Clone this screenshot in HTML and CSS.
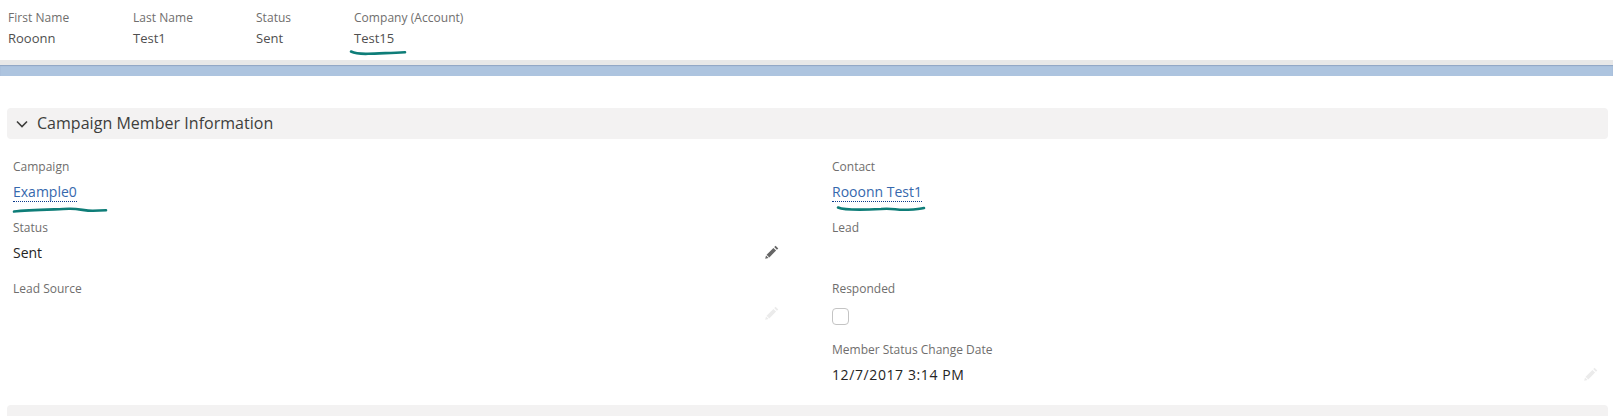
FILE: index.html
```html
<!DOCTYPE html>
<html lang="en">
<head>
<meta charset="utf-8">
<title>Campaign Member</title>
<link rel="stylesheet" href="styles.css">
</head>
<body>
<header class="highlights">
  <div class="hl hl-first"><div class="hl-label">First Name</div><div class="hl-value">Rooonn</div></div>
  <div class="hl hl-last"><div class="hl-label">Last Name</div><div class="hl-value">Test1</div></div>
  <div class="hl hl-status"><div class="hl-label">Status</div><div class="hl-value">Sent</div></div>
  <div class="hl">
    <div class="hl-label">Company (Account)</div>
    <div class="hl-value">Test15</div>
    <svg class="scribble scribble-company" viewBox="0 0 56 6" aria-hidden="true"><path d="M1 1.5C5 3.5 10 4 18 3.8S36 3 55 2.2"/></svg>
  </div>
</header>
<div class="band"></div>
<main class="page">
  <section class="section">
    <h2 class="section-head">
      <svg class="chevron" viewBox="0 0 12 8" aria-hidden="true"><path d="M1 1.5l5 5 5-5"/></svg>
      <span>Campaign Member Information</span>
    </h2>
    <div class="fields">
      <div class="field">
        <div class="label">Campaign</div>
        <div class="value"><a class="link">Example0</a>
          <svg class="scribble scribble-campaign" viewBox="0 0 94 6" aria-hidden="true"><path d="M1 4.5C15 3 40 2.5 56 1.8 66 1.5 72 4 80 3.8L93 3.3"/></svg>
        </div>
      </div>
      <div class="field">
        <div class="label">Contact</div>
        <div class="value"><a class="link">Rooonn Test1</a>
          <svg class="scribble scribble-contact" viewBox="0 0 88 6" aria-hidden="true"><path d="M1 1.5C8 4.5 25 4 44 3 56 2 58 4 68 3.8 76 3.5 82 3.5 87 2"/></svg>
        </div>
      </div>
      <div class="field">
        <div class="label">Status</div>
        <div class="value">Sent</div>
        <svg class="pencil" viewBox="0 0 14 14" aria-hidden="true"><path d="M10.6.7l2.7 2.7-1.4 1.4-2.7-2.7zM8.4 2.9l2.7 2.7-6.8 6.8-2.7-2.7zM1 10.4l2.6 2.6-3.4.8z"/></svg>
      </div>
      <div class="field">
        <div class="label">Lead</div>
        <div class="value"></div>
      </div>
      <div class="field">
        <div class="label">Lead Source</div>
        <div class="value"></div>
        <svg class="pencil pencil-faint" viewBox="0 0 14 14" aria-hidden="true"><path d="M10.6.7l2.7 2.7-1.4 1.4-2.7-2.7zM8.4 2.9l2.7 2.7-6.8 6.8-2.7-2.7zM1 10.4l2.6 2.6-3.4.8z"/></svg>
      </div>
      <div class="field">
        <div class="label">Responded</div>
        <div class="value"><span class="checkbox"></span></div>
      </div>
      <div class="field"></div>
      <div class="field">
        <div class="label">Member Status Change Date</div>
        <div class="value value-date">12/7/2017 3:14 PM</div>
        <svg class="pencil pencil-faint" viewBox="0 0 14 14" aria-hidden="true"><path d="M10.6.7l2.7 2.7-1.4 1.4-2.7-2.7zM8.4 2.9l2.7 2.7-6.8 6.8-2.7-2.7zM1 10.4l2.6 2.6-3.4.8z"/></svg>
      </div>
    </div>
  </section>
  <div class="section-next"></div>
</main>
</body>
</html>
```
FILE: styles.css
```css
* { box-sizing: border-box; }
html, body { margin: 0; height: 100%; overflow: hidden; background: #fff; }
body { font-family: "Open Sans", "Noto Sans", sans-serif; font-size: 13px; color: #16325c; }

.highlights { display: flex; height: 60px; padding: 9px 0 0 8px; background: #fff; }
.hl { position: relative; }
.hl-first { width: 125px; }
.hl-last { width: 123px; }
.hl-status { width: 98px; }
.hl-label { font-size: 12px; line-height: 18px; letter-spacing: .04px; color: #6f6e6d; }
.hl-value { margin-top: 2px; font-size: 13px; line-height: 18px; color: #4f4f4f; }

.band { height: 16px; background: #adc4df; border-top: 5px solid #e8e8e8; box-shadow: inset 0 1px 1px #8fa6c4; }

.page { padding: 32px 5px 0 7px; }
.section-head { display: flex; align-items: center; height: 31px; margin: 0; padding: 0 0 2px 9px; background: #f3f2f2; border-radius: 4px; font-size: 16px; font-weight: 400; color: #3e3e3c; letter-spacing: .03px; }
.chevron { width: 12px; height: 8px; margin: 2px 9px 0 0; fill: none; stroke: #3e3e3c; stroke-width: 1.6; }

.fields { display: grid; grid-template-columns: 819px 1fr; grid-auto-rows: 61px; padding: 19px 0 0 6px; }
.field { position: relative; }
.label { font-size: 12px; line-height: 18px; color: #6f6e6d; }
.value { position: relative; margin-top: 6px; min-height: 20px; font-size: 14px; line-height: 20px; color: #242424; }
.value-date { letter-spacing: .6px; }

.link { display: block; width: fit-content; height: 20px; color: #3668ad; border-bottom: 1px dotted #0b3a8c; line-height: 19px; }
.checkbox { display: block; width: 17px; height: 17px; margin-top: 10px; border: 1px solid #c4c4c4; border-radius: 4px; background: #fff; }

.pencil { position: absolute; left: 752px; top: 26px; width: 14px; height: 14px; fill: #666; }
.pencil-faint { fill: #ebebeb; }

.section-next { height: 20px; margin-top: 3px; background: #f3f2f2; border-radius: 4px 4px 0 0; }

.scribble { position: absolute; fill: none; stroke: #0e7d78; stroke-width: 2.6; stroke-linecap: round; overflow: visible; }
.scribble-company { left: -4px; top: 41px; width: 56px; height: 6px; }
.scribble-campaign { left: 0; top: 25px; width: 94px; height: 6px; }
.scribble-contact { left: 5px; top: 24px; width: 88px; height: 6px; }
```
